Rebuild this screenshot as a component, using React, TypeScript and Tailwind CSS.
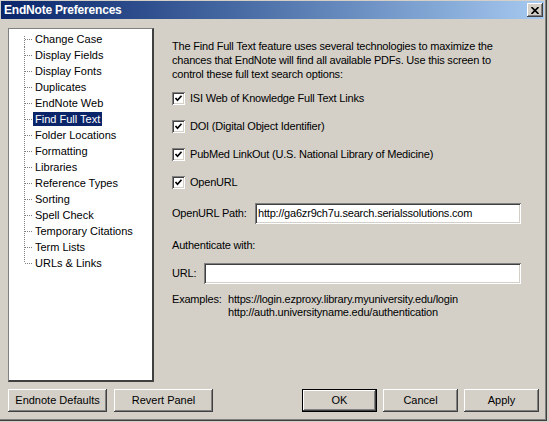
import React from 'react'

const raised =
  'shadow-[inset_-1px_-1px_#404040,inset_1px_1px_#ffffff,inset_-2px_-2px_#808080,inset_2px_2px_#d4d0c8]'
const sunken =
  'shadow-[inset_1px_1px_#808080,inset_-1px_-1px_#ffffff,inset_2px_2px_#404040,inset_-2px_-2px_#d4d0c8]'

const panels = [
  'Change Case',
  'Display Fields',
  'Display Fonts',
  'Duplicates',
  'EndNote Web',
  'Find Full Text',
  'Folder Locations',
  'Formatting',
  'Libraries',
  'Reference Types',
  'Sorting',
  'Spell Check',
  'Temporary Citations',
  'Term Lists',
  'URLs & Links',
]

const options = [
  'ISI Web of Knowledge Full Text Links',
  'DOI (Digital Object Identifier)',
  'PubMed LinkOut (U.S. National Library of Medicine)',
  'OpenURL',
]

function TreeLine({ first, last }: { first: boolean; last: boolean }) {
  return (
    <svg width="9" height="16" className="shrink-0">
      <line
        x1="0.5"
        y1={first ? 5 : 0}
        x2="0.5"
        y2={last ? 8 : 16}
        stroke="#808080"
        strokeDasharray="1 1"
      />
      <line x1="1" y1="8.5" x2="9" y2="8.5" stroke="#808080" strokeDasharray="1 1" />
    </svg>
  )
}

function Checkbox() {
  return (
    <span className={`w-[13px] h-[13px] bg-white shrink-0 flex items-center justify-center ${sunken}`}>
      <svg width="9" height="9" viewBox="0 0 9 9">
        <path d="M1.5 4 L3.5 6.2 L7.5 1.8" fill="none" stroke="#000" strokeWidth="1.7" />
      </svg>
    </span>
  )
}

function Button({ label, wide, isDefault }: { label: string; wide?: boolean; isDefault?: boolean }) {
  return (
    <button
      className={`${wide ? 'w-[99px]' : 'w-[75px]'} h-[23px] bg-[#d4d0c8] text-black ${
        isDefault ? 'border border-black' : ''
      }`}
    >
      <span className={`flex h-full w-full items-center justify-center ${raised}`}>{label}</span>
    </button>
  )
}

export default function App() {
  return (
    <div
      className="w-[549px] h-[422px] bg-[#d4d0c8] text-[11px] text-black overflow-hidden"
      style={{ fontFamily: '"Liberation Sans", Arial, sans-serif' }}
    >
      <div className="w-[547px] h-[421px] border-r border-b border-[#404040] flex flex-col">
        <div className="w-[546px] h-[420px] border-r border-b border-[#808080] flex flex-col">
          {/* title bar */}
          <div className="mx-px mt-px h-[18px] flex items-center justify-between bg-gradient-to-r from-[#0a246a] to-[#a6caf0] pl-[3px] pr-[1px]">
            <span className="text-white font-bold text-[12px] tracking-[-0.2px]">EndNote Preferences</span>
            <span className={`w-[16px] h-[14px] bg-[#d4d0c8] flex items-center justify-center ${raised}`}>
              <svg width="8" height="7" viewBox="0 0 8 7">
                <path d="M0.5 0 L7.5 7 M7.5 0 L0.5 7" stroke="#000" strokeWidth="1.6" />
              </svg>
            </span>
          </div>

          <div className="flex pl-[8px] pt-[9px]">
            {/* tree */}
            <div className="w-[146px] h-[354px] bg-white border-l border-t border-[#808080] border-r-2 border-b-2 border-r-[#404040] border-b-[#404040] pt-[2px] pl-[15px] shrink-0">
              {panels.map((p, i) => (
                <div key={p} className="flex items-center h-[16px]">
                  <TreeLine first={i === 0} last={i === panels.length - 1} />
                  <span
                    className={`px-[2px] leading-[14px] whitespace-nowrap ${
                      p === 'Find Full Text' ? 'bg-[#0a246a] text-white' : ''
                    }`}
                  >
                    {p}
                  </span>
                </div>
              ))}
            </div>

            {/* content */}
            <div className="ml-[18px] w-[349px] pt-[11px] flex flex-col tracking-[-0.2px]">
              <p className="leading-[14px]">
                The Find Full Text feature uses several technologies to maximize the chances that EndNote will
                find all available PDFs. Use this screen to control these full text search options:
              </p>

              <div className="mt-[11px] flex flex-col gap-[15px]">
                {options.map((o) => (
                  <label key={o} className="flex items-center gap-[5px] h-[13px]">
                    <Checkbox />
                    <span>{o}</span>
                  </label>
                ))}
              </div>

              <div className="mt-[14px] flex items-center h-[21px]">
                <span className="w-[83px] shrink-0">OpenURL Path:</span>
                <div className={`flex-1 h-[21px] bg-white flex items-center pl-[3px] ${sunken}`}>
                  http://ga6zr9ch7u.search.serialssolutions.com
                </div>
              </div>

              <div className="mt-[14px] h-[14px] flex items-center">Authenticate with:</div>

              <div className="mt-[11px] flex items-center h-[21px]">
                <span className="w-[32px] shrink-0">URL:</span>
                <div className={`flex-1 h-[21px] bg-white ${sunken}`} />
              </div>

              <div className="mt-[9px] flex leading-[13px]">
                <span className="w-[56px] shrink-0">Examples:</span>
                <div>
                  <div>https://login.ezproxy.library.myuniversity.edu/login</div>
                  <div>http://auth.universityname.edu/authentication</div>
                </div>
              </div>
            </div>
          </div>

          {/* buttons */}
          <div className="flex items-center pl-[8px] pr-[6px] mt-[7px]">
            <div className="flex gap-[7px]">
              <Button label="Endnote Defaults" wide />
              <Button label="Revert Panel" wide />
            </div>
            <div className="ml-auto flex gap-[6px]">
              <Button label="OK" isDefault />
              <Button label="Cancel" />
              <Button label="Apply" />
            </div>
          </div>
        </div>
      </div>
    </div>
  )
}
